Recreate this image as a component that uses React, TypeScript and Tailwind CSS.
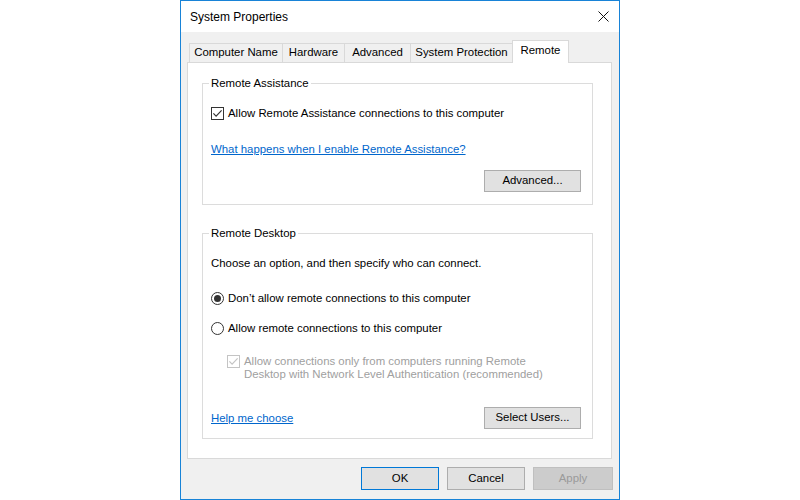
import React from 'react';

const tabs = [
  { label: 'Computer Name', w: 'w-[94px]' },
  { label: 'Hardware', w: 'w-[63px]' },
  { label: 'Advanced', w: 'w-[67px]' },
  { label: 'System Protection', w: 'w-[103px]' },
];

function CheckBox({ checked, disabled }: { checked: boolean; disabled?: boolean }) {
  const c = disabled ? '#c4c4c4' : '#333333';
  return (
    <svg width="13" height="13" viewBox="0 0 13 13" className="shrink-0">
      <rect x="0.5" y="0.5" width="12" height="12" fill="#fff" stroke={c} />
      {checked && <path d="M2.4 6.4 L5.1 9.1 L10.6 3.4" fill="none" stroke={c} strokeWidth="1.2" />}
    </svg>
  );
}

function Radio({ checked }: { checked: boolean }) {
  return (
    <svg width="13" height="13" viewBox="0 0 13 13" className="shrink-0">
      <circle cx="6.5" cy="6.5" r="6" fill="#fff" stroke="#333333" />
      {checked && <circle cx="6.5" cy="6.5" r="3.5" fill="#333333" />}
    </svg>
  );
}

function WinButton({ children, className }: { children: React.ReactNode; className: string }) {
  return (
    <div className={`flex items-center justify-center border ${className}`}>{children}</div>
  );
}

export default function App() {
  return (
    <div className="w-[800px] h-[500px] bg-white flex justify-center font-['Liberation_Sans',Arial,sans-serif] text-[11.4px] text-black">
      <div className="w-[440px] h-[500px] border border-[#1883d7] flex flex-col">
        {/* Title bar */}
        <div className="h-[31px] bg-white flex items-center justify-between pl-[9px]">
          <span className="text-[12px]">System Properties</span>
          <div className="w-[32px] h-full flex items-center justify-center">
            <svg width="11" height="11" viewBox="0 0 11 11">
              <path d="M0.5 0.5 L10.5 10.5 M10.5 0.5 L0.5 10.5" stroke="#111" strokeWidth="1" />
            </svg>
          </div>
        </div>

        {/* Body */}
        <div className="flex-1 bg-[#f0f0f0] pt-[8px] pl-[6px] pr-[7px]">
          {/* Tabs */}
          <div className="flex items-end h-[23px] pl-[2px]">
            {tabs.map((t, i) => (
              <div
                key={t.label}
                className={`${t.w} h-[19px] mb-[1px] ${i > 0 ? '-ml-[1px]' : ''} border-t border-l border-r border-[#d9d9d9] bg-[#f0f0f0] flex items-center justify-center`}
              >
                {t.label}
              </div>
            ))}
            <div className="w-[57px] h-[23px] -ml-[1px] relative z-10 border-t border-l border-r border-[#d9d9d9] bg-white flex items-center justify-center pb-[2px]">
              Remote
            </div>
          </div>

          {/* Tab page */}
          <div className="w-[425px] h-[397px] -mt-[1px] bg-white border border-[#d9d9d9] pt-[13px] pl-[14px]">
            {/* Remote Assistance */}
            <fieldset className="w-[391px] border border-[#dcdcdc] pl-[8px] pr-[11px] pb-[12px]">
              <legend className="-ml-[2px] px-[2px] leading-[15px]">Remote Assistance</legend>
              <div className="mt-[15px] h-[15px] flex items-center gap-[4px]">
                <CheckBox checked />
                <span>Allow Remote Assistance connections to this computer</span>
              </div>
              <div className="mt-[21px] h-[15px] leading-[15px] text-[#0066cc] underline">
                What happens when I enable Remote Assistance?
              </div>
              <div className="mt-[13px] flex justify-end">
                <WinButton className="w-[97px] h-[22px] bg-[#e1e1e1] border-[#adadad]">Advanced...</WinButton>
              </div>
            </fieldset>

            {/* Remote Desktop */}
            <fieldset className="mt-[21px] w-[391px] border border-[#dcdcdc] pl-[8px] pr-[11px] pb-[9px]">
              <legend className="-ml-[2px] px-[2px] leading-[15px]">Remote Desktop</legend>
              <div className="mt-[15px] leading-[15px]">Choose an option, and then specify who can connect.</div>
              <div className="mt-[20px] h-[15px] flex items-center gap-[4px]">
                <Radio checked />
                <span>Don’t allow remote connections to this computer</span>
              </div>
              <div className="mt-[15px] h-[15px] flex items-center gap-[4px]">
                <Radio checked={false} />
                <span>Allow remote connections to this computer</span>
              </div>
              <div className="mt-[19px] pl-[16px] flex items-start gap-[4px] text-[#a0a0a0]">
                <CheckBox checked disabled />
                <span className="leading-[13px]">
                  Allow connections only from computers running Remote
                  <br />
                  Desktop with Network Level Authentication (recommended)
                </span>
              </div>
              <div className="mt-[26px] flex items-center justify-between">
                <span className="text-[#0066cc] underline leading-[15px]">Help me choose</span>
                <WinButton className="w-[97px] h-[22px] bg-[#e1e1e1] border-[#adadad]">Select Users...</WinButton>
              </div>
            </fieldset>
          </div>

          {/* Dialog buttons */}
          <div className="mt-[8px] -mr-[1px] flex justify-end gap-[8px]">
            <WinButton className="w-[78px] h-[23px] bg-[#e1e1e1] border-[#0078d7]">OK</WinButton>
            <WinButton className="w-[78px] h-[23px] bg-[#e1e1e1] border-[#adadad]">Cancel</WinButton>
            <WinButton className="w-[80px] h-[23px] bg-[#cccccc] border-[#bfbfbf] text-[#9a9a9a]">Apply</WinButton>
          </div>
        </div>
      </div>
    </div>
  );
}
